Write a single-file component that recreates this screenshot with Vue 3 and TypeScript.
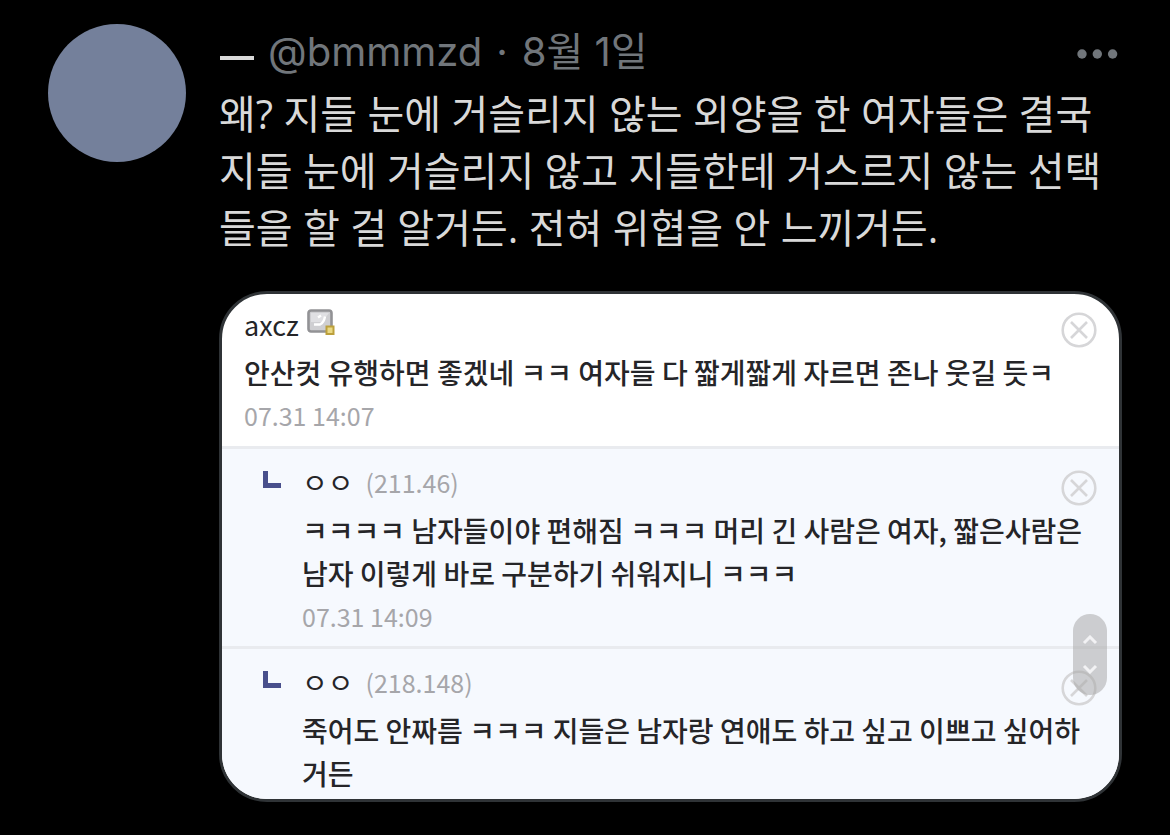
<script setup lang="ts">
interface Comment {
  id: number
  author: string
  ip?: string
  lines: string[]
  time?: string
  reply: boolean
}

const bodyLines: string[] = [
  '왜? 지들 눈에 거슬리지 않는 외양을 한 여자들은 결국',
  '지들 눈에 거슬리지 않고 지들한테 거스르지 않는 선택',
  '들을 할 걸 알거든. 전혀 위협을 안 느끼거든.',
]

const comments: Comment[] = [
  {
    id: 1,
    author: 'axcz',
    lines: ['안산컷 유행하면 좋겠네 ㅋㅋ 여자들 다 짧게짧게 자르면 존나 웃길 듯ㅋ'],
    time: '07.31 14:07',
    reply: false,
  },
  {
    id: 2,
    author: 'ㅇㅇ',
    ip: '(211.46)',
    lines: ['ㅋㅋㅋㅋ 남자들이야 편해짐 ㅋㅋㅋ 머리 긴 사람은 여자, 짧은사람은', '남자 이렇게 바로 구분하기 쉬워지니 ㅋㅋㅋ'],
    time: '07.31 14:09',
    reply: true,
  },
  {
    id: 3,
    author: 'ㅇㅇ',
    ip: '(218.148)',
    lines: ['죽어도 안짜름 ㅋㅋㅋ 지들은 남자랑 연애도 하고 싶고 이쁘고 싶어하', '거든'],
    reply: true,
  },
]
</script>

<template>
  <article class="post">
    <div class="avatar"></div>
    <div class="main">
      <header class="head">
        <span class="name" aria-label="ㅡ"></span>
        <span class="meta"><span>@bmmmzd</span><span>·</span><span>8월 1일</span></span>
        <button class="more" type="button" aria-label="더 보기">
          <svg width="42" height="12" viewBox="0 0 42 12" fill="#71767b">
            <circle cx="6" cy="6" r="4.7" />
            <circle cx="21.3" cy="6" r="4.7" />
            <circle cx="36.6" cy="6" r="4.7" />
          </svg>
        </button>
      </header>
      <p class="body">{{ bodyLines.join('\n') }}</p>

      <section class="card">
        <div v-for="c in comments" :key="c.id" class="comment" :class="{ reply: c.reply }">
          <svg v-if="c.reply" class="corner" width="18" height="18" viewBox="0 0 18 18">
            <path d="M2.5 0V14.5H18" fill="none" stroke="#484f8c" stroke-width="5" />
          </svg>
          <div class="content">
            <div class="who">
              <span class="author">{{ c.author }}</span>
              <span v-if="c.ip" class="ip">{{ c.ip }}</span>
              <svg v-else class="badge" width="28" height="27" viewBox="0 0 28 27">
                <rect x="1.5" y="1.5" width="23" height="21" rx="2.5" fill="#cfcfd2" stroke="#929295" stroke-width="2.6" />
                <path d="M4 4h18l-7 9H4z" fill="#e0e0e3" />
                <path d="M7 15.500h6q4-2 5-8M11 8.500l3-2" fill="none" stroke="#fff" stroke-width="2.4" />
                <rect x="19.500" y="17.500" width="7" height="7.500" fill="#ead984" stroke="#bca03c" stroke-width="2" />
              </svg>
            </div>
            <p class="text">{{ c.lines.join('\n') }}</p>
            <time v-if="c.time" class="time">{{ c.time }}</time>
          </div>
          <button class="close" type="button" aria-label="삭제">
            <svg width="36" height="36" viewBox="0 0 36 36" fill="none" stroke="#d6d6d8" stroke-width="2.6">
              <circle cx="18" cy="18" r="16.3" />
              <path d="M10 10L26 26M26 10L10 26" />
            </svg>
          </button>
        </div>
        <div class="scroller">
          <button type="button" aria-label="위로">
            <svg width="16" height="10" viewBox="0 0 16 10"><path d="M2 8L8 2L14 8" /></svg>
          </button>
          <button type="button" aria-label="아래로">
            <svg width="16" height="10" viewBox="0 0 16 10"><path d="M2 2L8 8L14 2" /></svg>
          </button>
        </div>
      </section>
    </div>
  </article>
</template>

<style>
body {
  margin: 0;
  background: #000;
}
</style>

<style scoped>
.post {
  display: flex;
  gap: 33px;
  padding: 24px 48px 33px;
  font-family: Inter, "Noto Sans CJK KR", sans-serif;
}
button {
  display: flex;
  padding: 0;
  border: 0;
  background: none;
  cursor: pointer;
}
.avatar {
  flex: none;
  width: 138px;
  height: 138px;
  border-radius: 50%;
  background: #74809b;
}
.main {
  flex: 1;
  min-width: 0;
}
.head {
  display: flex;
  align-items: center;
  height: 56px;
  margin-bottom: 5px;
}
.name {
  width: 34px;
  height: 4px;
  margin: 12px 14px 0 1px;
  background: #d9d9d9;
}
.meta {
  display: flex;
  gap: 14px;
  font-size: 40px;
  line-height: 56px;
  color: #71767b;
  white-space: nowrap;
}
.more {
  margin: 4px 4px 0 auto;
}
.body {
  margin: 0 0 35px;
  font-family: "Open Sans", "Noto Sans CJK KR", sans-serif;
  font-size: 40px;
  line-height: 57px;
  color: #d9d9d9;
  white-space: pre;
}
.card {
  position: relative;
  box-sizing: border-box;
  overflow: hidden;
  border: 3px solid #2f3336;
  border-radius: 48px;
  background: #fff;
  font-family: "Noto Sans CJK KR", sans-serif;
  font-size: 28px;
  line-height: 43px;
  color: #252528;
}
.comment {
  position: relative;
  display: flex;
  padding: 9px 22px 10px;
}
.reply {
  gap: 21px;
  padding: 12px 22px 9px 41px;
  border-top: 3px solid #e9ebef;
  background: #f6f9fe;
}
.comment:nth-child(3) {
  padding-bottom: 4px;
}
.corner {
  flex: none;
  margin-top: 10px;
}
.who {
  display: flex;
  align-items: center;
  gap: 12px;
  height: 43px;
  margin-bottom: 5px;
}
.author {
  font-size: 27px;
}
.reply .author {
  font-size: 28px;
}
.badge {
  margin: -4px 0 0 -4px;
}
.ip,
.time {
  font-size: 25px;
  color: #a6a6aa;
}
.text {
  margin: 0;
  font-weight: 500;
  white-space: pre;
}
.time {
  display: block;
  line-height: 42px;
}
.close {
  position: absolute;
  top: 18px;
  right: 22px;
}
.reply .close {
  top: 21px;
}
.scroller {
  position: absolute;
  right: 12px;
  bottom: 104px;
  display: flex;
  flex-direction: column;
  align-items: center;
  justify-content: space-between;
  box-sizing: border-box;
  width: 34px;
  height: 81px;
  padding: 21px 0;
  border-radius: 17px;
  background: rgba(170, 170, 170, 0.55);
}
.scroller path {
  fill: none;
  stroke: #f2f2f4;
  stroke-width: 3;
}
</style>
